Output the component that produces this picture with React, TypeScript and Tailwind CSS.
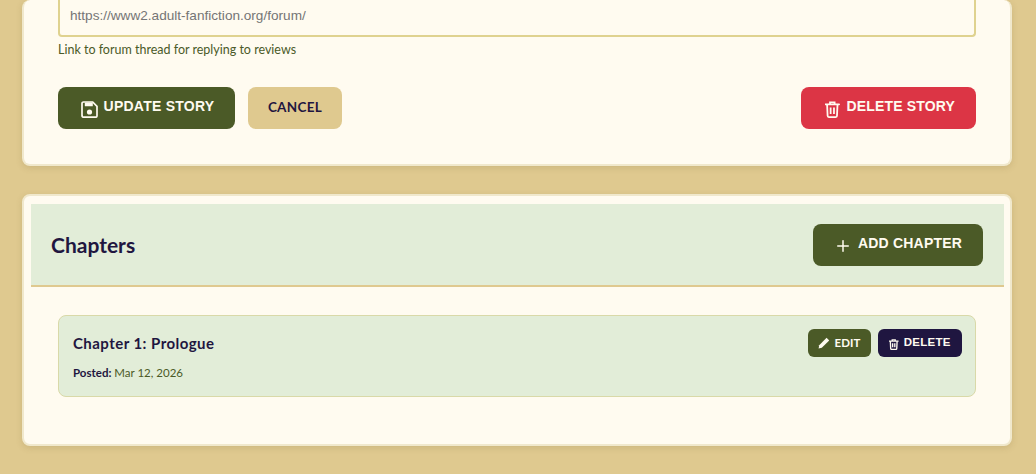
import React from "react";
import { Plus } from "lucide-react";

const trebuchet = "font-['Lato','Noto_Sans',sans-serif]";
const arial = "font-['Liberation_Sans',Arial,sans-serif]";

function SaveIcon() {
  return (
    <svg width="17" height="17" viewBox="0 0 17 17" className="mt-[2px] shrink-0" fill="none">
      <path d="M2.5 1h9.2L16 5.3v9.7a1.2 1.2 0 0 1-1.2 1.2H2.5A1.4 1.4 0 0 1 1 14.9V2.4A1.4 1.4 0 0 1 2.5 1Z" stroke="currentColor" strokeWidth="1.7" />
      <rect x="3.8" y="1.5" width="8" height="3.8" rx="0.5" fill="currentColor" />
      <circle cx="8.5" cy="11" r="2.6" fill="currentColor" />
    </svg>
  );
}

function TrashIcon({ size, strokeWidth = 1.7 }: { size: number; strokeWidth?: number }) {
  return (
    <svg width={size * 0.86} height={size} viewBox="0 0 14 16" className="mt-[2px] shrink-0" fill="none" stroke="currentColor" strokeWidth={strokeWidth}>
      <path d="M0.5 3h13" strokeLinecap="round" />
      <path d="M4.8 3V1.2h4.4V3" />
      <path d="M2 3l.5 11a1.2 1.2 0 0 0 1.2 1.2h6.6a1.2 1.2 0 0 0 1.2-1.2L12 3" />
      <path d="M5.4 6v6.2M8.6 6v6.2" />
    </svg>
  );
}

export default function App() {
  return (
    <div className={`h-[474px] w-[1036px] overflow-hidden bg-[#dfc98f] pl-[22px] pr-[24px] ${trebuchet}`}>
      <section className="flex h-[166px] flex-col justify-end rounded-[8px] border-2 border-t-0 border-[#f0e8cc] bg-[#fffbf0] px-[34px] pb-[35px] shadow-[0_2px_6px_rgba(120,100,50,0.18)]">
        <div className="flex h-[37px] items-end rounded-b-[4px] border-2 border-t-0 border-[#dfd28f] pb-[11px] pl-[10px]">
          <span className={`${arial} text-[13.6px] leading-[16px] text-[#757575]`}>https://www2.adult-fanfiction.org/forum/</span>
        </div>
        <p className="mt-[5px] text-[12.5px] leading-[16px] text-[#4a5a28]">Link to forum thread for replying to reviews</p>
        <div className="mt-[29px] flex items-center gap-[13px]">
          <button className={`${arial} flex h-[42px] w-[177px] items-center justify-center gap-[6px] rounded-[8px] bg-[#4b5a27] pl-[2px] text-[14px] font-bold tracking-[0.25px] text-[#fffbf0]`}>
            <SaveIcon />
            <span className="-mt-[3px]">UPDATE STORY</span>
          </button>
          <button className="flex h-[42px] w-[94px] items-center justify-center rounded-[8px] bg-[#dfc98f] text-[13.5px] font-bold tracking-[0.3px] text-[#1f1640]">
            <span className="-mt-[1px]">CANCEL</span>
          </button>
          <button className={`${arial} ml-auto flex h-[42px] w-[175px] items-center justify-center gap-[7px] rounded-[8px] bg-[#dc3545] pl-[3px] text-[14px] font-bold tracking-[0.15px] text-[#fffbf0]`}>
            <TrashIcon size={17} />
            <span className="-mt-[3px]">DELETE STORY</span>
          </button>
        </div>
      </section>

      <section className="mt-[28px] h-[252px] rounded-[8px] border-2 border-[#f0e8cc] bg-[#fffbf0] pb-[7px] pl-[7px] pr-[6px] pt-[7px] shadow-[0_2px_6px_rgba(120,100,50,0.18)]">
        <div className="mt-[1px] flex h-[83px] items-center justify-between border-b-2 border-[#dfc98f] bg-[#e2edd8] pl-[20px] pr-[21px]">
          <h2 className="text-[21px] font-bold leading-[24px] text-[#1f1640]">Chapters</h2>
          <button className={`${arial} flex h-[42px] w-[170px] items-center justify-center gap-[6px] rounded-[8px] bg-[#4b5a27] text-[14px] font-bold tracking-[0.2px] text-[#fffbf0]`}>
            <Plus size={18} strokeWidth={2} className="mt-[2px]" />
            <span className="-mt-[3px]">ADD CHAPTER</span>
          </button>
        </div>
        <div className="pl-[27px] pr-[28px] pt-[28px]">
          <div className="flex h-[82px] items-start justify-between rounded-[8px] border border-[#d9d9a8] bg-[#e2edd8] pl-[14px] pr-[13px] pt-[13px]">
            <div>
              <h3 className="text-[15px] font-bold leading-[28px] tracking-[0.45px] text-[#1f1640]">Chapter 1: Prologue</h3>
              <p className="mt-[8px] text-[11.5px] leading-[16px] text-[#4b5a27]">
                <strong className="font-bold text-[#1f1640]">Posted:</strong> Mar 12, 2026
              </p>
            </div>
            <div className="flex gap-[7px]">
              <button className="flex h-[28px] w-[63px] items-center justify-center gap-[4px] rounded-[6px] bg-[#4b5a27] text-[11.5px] font-bold tracking-[0.1px] text-[#fffbf0]">
                <svg width="12" height="12" viewBox="0 0 12 12" fill="currentColor"><path d="M8.6 0.8l2.6 2.6-7.4 7.4L0.6 11.4l.6-3.2z" /></svg>
                EDIT
              </button>
              <button className={`${arial} flex h-[28px] w-[84px] items-center justify-center gap-[5px] rounded-[6px] bg-[#1f1640] text-[11.5px] font-bold tracking-[0.3px] text-[#fffbf0]`}>
                <TrashIcon size={11} strokeWidth={2} />
                <span>DELETE</span>
              </button>
            </div>
          </div>
        </div>
      </section>
    </div>
  );
}
